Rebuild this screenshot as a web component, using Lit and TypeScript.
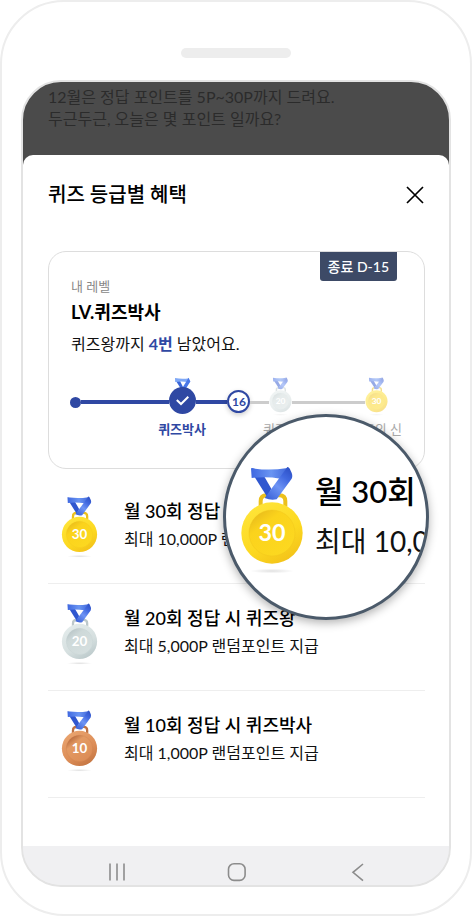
import { LitElement, html, css, svg } from "lit";
import { customElement, property } from "lit/decorators.js";

type Tier = "gold" | "silver" | "bronze";

const TONES: Record<Tier, { light: string; base: string; dark: string; face: string; rim: string }> = {
  gold: { light: "#ffe53a", base: "#fcd820", dark: "#f2c018", face: "#fbd31c", rim: "#ecc01c" },
  silver: { light: "#e4ecec", base: "#d5dfdf", dark: "#b9c7c9", face: "#ced9d9", rim: "#bcc8ca" },
  bronze: { light: "#eaa570", base: "#dc8d57", dark: "#c27340", face: "#e39a63", rim: "#bd7042" },
};

const ribbon = () => svg`
  <path d="M42 30 L72 30 L94 68 L82 94 Z" fill="#3057cf" />
  <path d="M33 7 Q38 5 46 8 Q90 14 143 6 L122 38 Q80 31 35 36 Z" fill="url(#band)" />
  <path d="M142 3 Q148 3 152 14 Q160 28 155 38 L110 100 Q92 104 74 96 L118 36 Z" fill="url(#strap)" />
`;

@customElement("quiz-medal")
export class QuizMedal extends LitElement {
  @property() tier: Tier = "gold";
  @property() count = "";

  static styles = css`
    :host { display: block; }
    svg { display: block; width: 100%; height: 100%; }
    text { font-family: Lato, "Noto Sans CJK KR", sans-serif; font-weight: 700; font-size: 70px; fill: #fff; }
  `;

  render() {
    const t = TONES[this.tier];
    return html`<svg viewBox="0 0 192 324" role="img" aria-label=${this.count}>
      <defs>
        <linearGradient id="band" x1="0" y1="0" x2="1" y2="0">
          <stop offset="0" stop-color="#3f68e0" /><stop offset="0.55" stop-color="#6a95f2" />
          <stop offset="1" stop-color="#4168dc" />
        </linearGradient>
        <linearGradient id="strap" x1="0.9" y1="0" x2="0.2" y2="1">
          <stop offset="0" stop-color="#2c4fc4" /><stop offset="0.3" stop-color="#4169e0" />
          <stop offset="0.6" stop-color="#6e94f4" /><stop offset="1" stop-color="#3f66da" />
        </linearGradient>
        <linearGradient id="disc" x1="0.2" y1="0" x2="0.8" y2="1">
          <stop offset="0" stop-color=${t.light} /><stop offset="0.6" stop-color=${t.base} />
          <stop offset="1" stop-color=${t.dark} />
        </linearGradient>
        <linearGradient id="face" x1="0.2" y1="0.1" x2="0.8" y2="0.9">
          <stop offset="0" stop-color=${t.rim} /><stop offset="0.25" stop-color=${t.face} />
          <stop offset="1" stop-color=${t.base} />
        </linearGradient>
        <radialGradient id="shade">
          <stop offset="0" stop-color="#000" stop-opacity="0.12" /><stop offset="1" stop-color="#000" stop-opacity="0" />
        </radialGradient>
      </defs>
      <ellipse cx="96" cy="315" rx="66" ry="7" fill="url(#shade)" />
      <path d="M62 122 V106 Q62 88 80 88 H118 Q136 88 136 106 V122" fill="none" stroke=${t.rim} stroke-width="12" />
      ${ribbon()}
      <circle cx="96" cy="201" r="92" fill="url(#disc)" />
      <circle cx="96" cy="201" r="69" fill="url(#face)" stroke=${t.rim} stroke-width="2" stroke-opacity="0.5" />
      <text x="96" y="226" text-anchor="middle">${this.count}</text>
    </svg>`;
  }
}

@customElement("quiz-timeline")
export class QuizTimeline extends LitElement {
  static styles = css`
    :host { display: block; }
    .track { display: flex; align-items: flex-start; margin: 0; padding: 0; list-style: none; }
    .node { display: flex; flex-direction: column; align-items: center; flex: none; }
    .seg { margin-top: 23px; height: 4px; background: #2f48a3; }
    .seg.todo { margin-top: 24px; height: 3px; background: #ccc; }
    .s1 { flex: 88; } .s2 { flex: 32; } .s3 { flex: 19; } .s4 { flex: 73; }
    .dot { width: 11px; height: 11px; margin-top: 20px; border-radius: 50%; background: #2f48a3; }
    .mark { height: 42px; }
    .reached { width: 27px; }
    .waiting { width: 23px; }
    .waiting quiz-medal { width: 23px; height: 39px; opacity: 0.5; }
    .reached svg { display: block; width: 27px; height: 37px; }
    .count {
      box-sizing: border-box; width: 23px; height: 23px; margin-top: 13px; border: 2px solid #2f48a3;
      border-radius: 50%; background: #fff; color: #2f48a3; font-size: 12px; font-weight: 700;
      line-height: 19px; text-align: center; box-shadow: 0 2px 5px rgba(0, 0, 0, 0.2);
    }
    .label { font-size: 13px; line-height: 20px; white-space: nowrap; color: #aaa; }
    .label.on { font-weight: 700; color: #2f48a3; }
  `;

  render() {
    return html`<ol class="track">
      <li class="node"><span class="dot"></span></li>
      <li class="seg s1" role="presentation"></li>
      <li class="node reached">
        <div class="mark">
          <svg viewBox="0 0 27 37" aria-hidden="true">
            <path d="M7 4 L11 4 L15 12 L12 12 Z" fill="#3a66d8" />
            <path d="M6 1 Q13 2.4 20 1.2 L18 5 Q13 4.2 6.2 5 Z" fill="#7fa8f6" />
            <path d="M19.6 0.8 L21.4 4.6 L16 13 L12 13 L17 5 Z" fill="#4a78e8" />
            <circle cx="13.5" cy="23.5" r="13.5" fill="#2f48a3" />
            <path d="M7.8 23 L12 27 L19.3 19.8" fill="none" stroke="#fff" stroke-width="2" />
          </svg>
        </div>
        <span class="label on">퀴즈박사</span>
      </li>
      <li class="seg s2" role="presentation"></li>
      <li class="node"><span class="count">16</span></li>
      <li class="seg todo s3" role="presentation"></li>
      <li class="node waiting">
        <div class="mark"><quiz-medal tier="silver" count="20"></quiz-medal></div>
        <span class="label">퀴즈왕</span>
      </li>
      <li class="seg todo s4" role="presentation"></li>
      <li class="node waiting">
        <div class="mark"><quiz-medal tier="gold" count="30"></quiz-medal></div>
        <span class="label">퀴즈의 신</span>
      </li>
    </ol>`;
  }
}

const BENEFITS: { tier: Tier; count: string; title: string; text: string }[] = [
  { tier: "gold", count: "30", title: "월 30회 정답 시 퀴즈의 신", text: "최대 10,000P 랜덤포인트 지급" },
  { tier: "silver", count: "20", title: "월 20회 정답 시 퀴즈왕", text: "최대 5,000P 랜덤포인트 지급" },
  { tier: "bronze", count: "10", title: "월 10회 정답 시 퀴즈박사", text: "최대 1,000P 랜덤포인트 지급" },
];

@customElement("app-root")
export class AppRoot extends LitElement {
  static styles = css`
    :host { display: block; background: #fff; color: #111; font-family: Lato, "Noto Sans CJK KR", sans-serif; }
    h1, h2, h3, p, ul { margin: 0; padding: 0; }
    .phone {
      box-sizing: border-box; display: flex; flex-direction: column; min-height: 100vh;
      padding: 46px 19px 27px; border: 2px solid #ededed; border-radius: 64px;
    }
    .speaker { align-self: center; width: 110px; height: 10px; margin-bottom: 22px; border-radius: 5px; background: #ededed; }
    .screen {
      display: flex; flex: 1; flex-direction: column; overflow: hidden;
      border: 2px solid #e3e3e3; border-radius: 40px;
      background: linear-gradient(#4b4b4b 120px, #f0f0f2 120px);
    }
    .behind { box-sizing: border-box; height: 73px; padding: 4px 25px 0; font-size: 16px; line-height: 22px; color: #2b2b2b; }
    .sheet { flex: 1; padding: 24px 24px 0 25px; border-radius: 10px 10px 0 0; background: #fff; }
    .head { display: flex; align-items: center; justify-content: space-between; height: 30px; }
    h1 { font-size: 20px; line-height: 30px; font-weight: 500; color: #000; }
    .close { width: 20px; height: 20px; padding: 0; border: 0; background: none; }
    .close svg { display: block; width: 20px; height: 20px; }
    .card {
      position: relative; margin-top: 42px; padding: 24px 36px 29px 22px;
      border: 1px solid #ddd; border-radius: 18px;
    }
    .due {
      position: absolute; top: 0; right: 27px; padding: 0 8px; border-radius: 0 0 3px 3px;
      background: #3d4a66; color: #fff; font-size: 14px; line-height: 29px; font-weight: 500;
    }
    .caption { font-size: 13px; line-height: 20px; color: #888; }
    h2 { margin-top: 3px; font-size: 18px; line-height: 26px; font-weight: 700; color: #000; }
    .remain { margin-top: 8px; font-size: 16px; line-height: 22px; }
    .remain strong { color: #2f48a3; font-weight: 700; }
    quiz-timeline { margin: 22px 0 0 -1px; }
    .benefits { position: relative; margin-top: 8px; }
    ul { list-style: none; }
    .row { display: flex; gap: 26px; height: 106px; padding-left: 13px; border-bottom: 1px solid #eee; }
    .row quiz-medal { flex: none; width: 37px; height: 62px; margin-top: 19px; }
    .copy { margin-top: 20px; }
    h3 { font-size: 18px; line-height: 28px; font-weight: 500; color: #000; }
    .copy p { font-size: 16px; line-height: 28px; }
    .lens {
      box-sizing: border-box; position: absolute; top: -63px; right: -4px; width: 206px; height: 206px;
      display: flex; gap: 11px; padding: 49px 0 0 14px; overflow: hidden; white-space: nowrap;
      border: 3px solid #4b5a6a; border-radius: 50%; background: #fff; box-shadow: 0 3px 10px rgba(0, 0, 0, 0.3);
    }
    .lens quiz-medal { flex: none; width: 64px; height: 108px; }
    .big { font-size: 31px; line-height: 50px; font-weight: 500; color: #000; }
    .mid { font-size: 28px; line-height: 50px; }
    .nav { display: flex; justify-content: center; height: 39px; background: #f0f0f2; }
    .nav button { width: 120px; padding: 13px 0 0; border: 0; background: none; }
    .nav svg { display: block; width: 20px; height: 20px; margin: 0 auto; fill: none; stroke: #8c8c8c; stroke-width: 1.6; }
  `;

  render() {
    const first = BENEFITS[0];
    return html`<div class="phone">
      <div class="speaker"></div>
      <div class="screen">
        <div class="behind">
          <p>12월은 정답 포인트를 5P~30P까지 드려요.</p>
          <p>두근두근, 오늘은 몇 포인트 일까요?</p>
        </div>
        <main class="sheet">
          <header class="head">
            <h1>퀴즈 등급별 혜택</h1>
            <button class="close" aria-label="닫기">
              <svg viewBox="0 0 20 20"><path d="M2 3 L18 19 M18 3 L2 19" fill="none" stroke="#000" stroke-width="1.7" /></svg>
            </button>
          </header>
          <section class="card">
            <span class="due">종료 D-15</span>
            <p class="caption">내 레벨</p>
            <h2>LV.퀴즈박사</h2>
            <p class="remain">퀴즈왕까지 <strong>4번</strong> 남았어요.</p>
            <quiz-timeline></quiz-timeline>
          </section>
          <section class="benefits">
            <ul>
              ${BENEFITS.map(
                (b) => html`<li class="row">
                  <quiz-medal tier=${b.tier} count=${b.count}></quiz-medal>
                  <div class="copy"><h3>${b.title}</h3><p>${b.text}</p></div>
                </li>`
              )}
            </ul>
            <div class="lens" aria-hidden="true">
              <quiz-medal tier=${first.tier} count=${first.count}></quiz-medal>
              <div><p class="big">월 30회</p><p class="mid">최대 10,0</p></div>
            </div>
          </section>
        </main>
        <nav class="nav">
          <button aria-label="최근 앱"><svg viewBox="0 0 20 20"><path d="M4 1.5 V18.5 M11 1.5 V18.5 M18 1.5 V18.5" /></svg></button>
          <button aria-label="홈"><svg viewBox="0 0 20 20"><rect x="2.5" y="1.8" width="16.6" height="16.6" rx="5.5" /></svg></button>
          <button aria-label="뒤로"><svg viewBox="0 0 20 20"><path d="M17 2 L7 10.3 L17 18.6" /></svg></button>
        </nav>
      </div>
    </div>`;
  }
}
